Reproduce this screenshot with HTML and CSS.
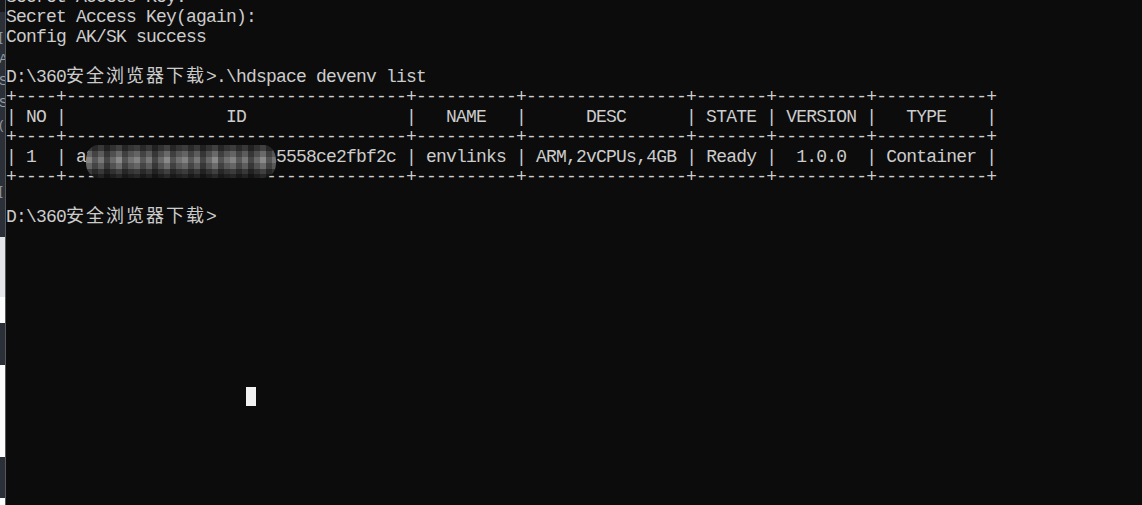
FILE: index.html
```html
<!DOCTYPE html>
<html lang="zh-CN">
<head>
<meta charset="utf-8">
<title>hdspace devenv list</title>
<link rel="stylesheet" href="styles.css">
</head>
<body>
<div class="behind">
  <div class="blk blk-top"></div>
  <div class="blk blk-slate blk-slate-tall"><div class="behind-text">[
A
S
S
(


[</div></div>
  <div class="blk blk-light"></div>
  <div class="blk blk-white blk-h26"></div>
  <div class="blk blk-slate blk-h42"></div>
  <div class="blk blk-white blk-h92"></div>
  <div class="blk blk-slate blk-h41"></div>
  <div class="blk blk-white blk-rest"></div>
</div>
<div class="edge"></div>
<main class="console">
<pre class="screen">Secret Access Key:
Secret Access Key(again):
Config AK/SK success

D:\360<span class="cjk">安全浏览器下载</span>&gt;.\hdspace devenv list
+----+----------------------------------+----------+----------------+-------+---------+-----------+
| NO |                ID                |   NAME   |      DESC      | STATE | VERSION |   TYPE    |
+----+----------------------------------+----------+----------------+-------+---------+-----------+
| 1  | a<span class="redact">3f9d1b7e0c42a86d9e1<span class="mosaic"></span></span>5558ce2fbf2c | envlinks | ARM,2vCPUs,4GB | Ready |  1.0.0  | Container |
+----+----------------------------------+----------+----------------+-------+---------+-----------+

D:\360<span class="cjk">安全浏览器下载</span>&gt;








                        <span class="cursor"></span></pre>
</main>
</body>
</html>
```
FILE: styles.css
```css
html, body {
  margin: 0;
  padding: 0;
}

body {
  background: #0c0c0c;
  height: 505px;
  overflow: hidden;
  display: flex;
}

.behind {
  width: 5px;
  flex: none;
  display: flex;
  flex-direction: column;
  overflow: hidden;
}

.blk {
  flex: none;
  overflow: hidden;
}

.blk-top { height: 12px; background: #17191d; }
.blk-slate { background: #2b2f38; }
.blk-slate-tall { height: 225px; }
.blk-light { height: 60px; background: #e5e6ea; }
.blk-white { background: #fcfcfc; }
.blk-h26 { height: 26px; }
.blk-h42 { height: 42px; }
.blk-h92 { height: 92px; }
.blk-h41 { height: 41px; }
.blk-rest { flex: 1; }

.behind-text {
  margin: 0;
  padding-top: 14px;
  margin-left: -1px;
  font: 13px/22px "Liberation Sans", sans-serif;
  color: #9aa0a8;
  white-space: pre;
}

.edge {
  width: 1px;
  flex: none;
  background: #555759;
}

.console {
  flex: 1;
  overflow: hidden;
}

.screen {
  margin: -13px 0 0;
  font-family: "Liberation Mono", "Noto Sans CJK SC", monospace;
  font-size: 18px;
  line-height: 20px;
  letter-spacing: -0.8px;
  color: #cccccc;
  white-space: pre;
}

.cjk {
  letter-spacing: 2px;
}

.redact {
  position: relative;
}

.mosaic {
  position: absolute;
  left: 0;
  right: 0;
  top: -2px;
  height: 33px;
  border-radius: 12px / 15px;
  background:
    repeating-linear-gradient(90deg,
      #d0d0d0 0 6px, #8c8c8c 6px 12px, #c0c0c0 12px 18px, #707070 18px 24px,
      #a8a8a8 24px 30px, #dcdcdc 30px 36px, #848484 36px 42px, #b4b4b4 42px 48px),
    linear-gradient(180deg,
      #4a4a4a 0 6px, #7a7a7a 6px 12px, #a0a0a0 12px 18px, #7c7c7c 18px 24px,
      #4a4a4a 24px 29px, #2e2e2e 29px 33px);
  background-blend-mode: multiply;
}

.cursor {
  display: inline-block;
  width: 10px;
  height: 19px;
  background: #f2f2f2;
  vertical-align: top;
}
```
